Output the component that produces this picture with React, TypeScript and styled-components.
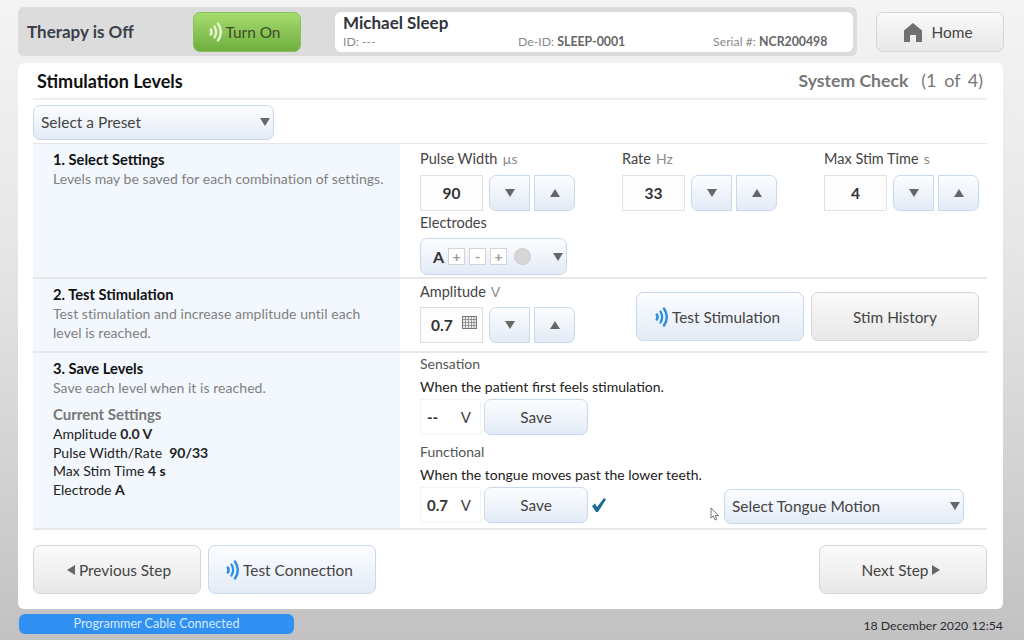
import React from 'react'
import styled, {createGlobalStyle, css} from 'styled-components'

const GlobalStyle = createGlobalStyle`
  html, body {
    margin: 0;
    padding: 0;
    font-family: "Lato", "Open Sans", sans-serif;
    color: #222;
  }
  * { box-sizing: border-box; }
`

const Page = styled.div`
  width: 1024px;
  height: 640px;
  overflow: hidden;
  padding: 7px 20px 0 18px;
  background: linear-gradient(#f4f4f4 0%, #e6e6e6 40%, #c2c2c2 100%);
`

const TopRow = styled.div`
  display: flex;
  align-items: flex-start;
  justify-content: space-between;
  height: 49px;
`

const StatusBar = styled.div`
  display: flex;
  align-items: center;
  width: 839px;
  height: 49px;
  padding: 0 4px 0 9px;
  background: #dcdcdc;
  border-radius: 6px;
`

const TherapyText = styled.div`
  width: 166px;
  font-size: 17px;
  font-weight: 700;
  color: #3a3f4a;
`

const buttonTone = {
  gray: css`
    background: linear-gradient(#fafafa, #e8e8e8);
    border: 1px solid #d6d6d6;
  `,
  blue: css`
    background: linear-gradient(#fcfdff, #e3ebf6);
    border: 1px solid #c9d9ec;
  `,
  green: css`
    background: linear-gradient(#a6dc6e, #6fae3f);
    border: 1px solid #86c058;
  `,
}

const Button = styled.div<{ $tone: keyof typeof buttonTone; $w: number; $h: number }>`
  display: flex;
  align-items: center;
  justify-content: center;
  gap: 4px;
  flex: none;
  width: ${p => p.$w}px;
  height: ${p => p.$h}px;
  border-radius: 7px;
  font-size: 15.4px;
  color: #444;
  ${p => buttonTone[p.$tone]}
`

const WaveButton = styled(Button)`
  gap: 3px;
  padding-right: 5px;
`

const TurnOn = styled(WaveButton)`
  color: #3d4a2c;
  margin-right: 34px;
`

const HomeButton = styled(Button)`
  margin-top: 5px;
  padding-right: 4px;
  gap: 8px;
`

const PatientCard = styled.div`
  flex: 1;
  height: 40px;
  padding: 1px 10px 0 8px;
  background: #fff;
  border-radius: 6px;
`

const PatientName = styled.div`
  font-size: 17px;
  font-weight: 700;
  line-height: 20px;
  color: #33333d;
`

const PatientMeta = styled.div`
  display: grid;
  grid-template-columns: 175px 195px 1fr;
  margin-top: 1px;
  font-size: 12.3px;
  line-height: 16px;
  color: #8a8a8a;

  b {
    color: #666;
  }
`

const Panel = styled.div`
  width: 985px;
  height: 546px;
  margin-top: 7px;
  padding: 0 16px 0 15px;
  background: #fff;
  border-radius: 6px;
`

const PanelHead = styled.div`
  display: flex;
  align-items: center;
  justify-content: space-between;
  height: 37px;
  padding: 0 4px;
  border-bottom: 2px solid #eee;
`

const PanelTitle = styled.div`
  font-size: 18px;
  font-weight: 700;
  color: #111;
`

const StepText = styled.div`
  margin-top: -2px;
  font-size: 18px;
  color: #777;
  word-spacing: 3px;

  b {
    margin-right: 13px;
    font-size: 17.6px;
    word-spacing: 0;
  }
`

const PresetRow = styled.div`
  height: 44px;
  padding-top: 5px;
  border-bottom: 1px solid #e6e6e6;
`

const Dropdown = styled.div<{ $w: number; $h: number }>`
  display: flex;
  align-items: center;
  justify-content: space-between;
  width: ${p => p.$w}px;
  height: ${p => p.$h}px;
  padding: 0 3px 1px 7px;
  border: 1px solid #c9d9ec;
  border-radius: 7px;
  background: linear-gradient(#fcfdff, #e3ebf6);
  font-size: 15.5px;
  color: #444;
`

const Section = styled.div<{ $h: number }>`
  display: grid;
  grid-template-columns: 367px 1fr;
  grid-template-rows: minmax(0, 1fr);
  height: ${p => p.$h}px;
  border-bottom: 2px solid #e8e8e8;
`

const SectionInfo = styled.div`
  padding: 6px 10px 0 20px;
  background: #f3f8fe;
`

const InfoTitle = styled.div`
  font-size: 14.7px;
  font-weight: 700;
  line-height: 18px;
  color: #111;
`

const InfoText = styled.div`
  margin-top: 1px;
  font-size: 14px;
  letter-spacing: 0.05px;
  line-height: 19px;
  color: #808080;
`

const SubTitle = styled.div`
  margin-top: 7px;
  font-size: 15px;
  font-weight: 700;
  line-height: 21px;
  color: #777;
`

const SettingLine = styled.div`
  font-size: 14px;
  line-height: 18.7px;
  color: #222;
`

const SectionBody = styled.div<{ $top: number }>`
  padding: ${p => p.$top}px 8px 0 20px;
`

const FieldRow = styled.div`
  display: grid;
  grid-template-columns: 202px 202px 1fr;
`

const FieldLabel = styled.div`
  height: 25px;
  font-size: 14.5px;
  line-height: 17px;
  color: #444;

  span {
    margin-left: 5px;
    font-size: 14px;
    color: #8c8c8c;
  }
`

const Stepper = styled.div`
  display: flex;
`

const ValueBox = styled.div`
  display: flex;
  align-items: center;
  justify-content: center;
  width: 63px;
  height: 36px;
  margin-right: 6px;
  border: 1px solid #e2e2e2;
  background: #fdfdfd;
  font-size: 15.5px;
  font-weight: 700;
  color: #333;
`

const AmpBox = styled(ValueBox)`
  justify-content: space-between;
  padding: 0 5px 0 10px;
  border-color: #dedede;

  svg {
    margin-top: -6px;
  }
`

const StepButton = styled.div`
  display: flex;
  align-items: center;
  justify-content: center;
  width: 41px;
  height: 36px;
  margin-right: 4px;
  border: 1px solid #c9d9ec;
  background: linear-gradient(#fcfdff, #e3ebf6);
  border-radius: 7px 0 0 7px;

  & + & {
    margin-right: 0;
    border-radius: 0 7px 7px 0;
  }
`

const Arrow = styled.i<{ $dir: 'up' | 'down' | 'left' | 'right'; $size?: number }>`
  display: block;
  flex: none;
  width: 0;
  height: 0;
  ${({$dir, $size = 5}) => {
    const side = `${$size}px solid transparent`
    const fill = `${Math.round($size * 1.5)}px solid #666`
    if ($dir === 'up') return css`border-left: ${side}; border-right: ${side}; border-bottom: ${fill};`
    if ($dir === 'down') return css`border-left: ${side}; border-right: ${side}; border-top: ${fill};`
    if ($dir === 'left') return css`border-top: ${side}; border-bottom: ${side}; border-right: ${fill};`
    return css`border-top: ${side}; border-bottom: ${side}; border-left: ${fill};`
  }}
`

const ElectrodeLabel = styled(FieldLabel)`
  margin-top: 3px;
  height: 24px;
`

const ElectrodeSelect = styled(Dropdown)`
  padding: 0 3px 0 12px;
`

const ElectrodeLeft = styled.div`
  display: flex;
  align-items: center;
  gap: 4px;
  font-size: 16px;
  font-weight: 700;
  color: #333;
`

const ElectrodeChip = styled.span`
  display: flex;
  align-items: center;
  justify-content: center;
  width: 17px;
  height: 17px;
  border: 1px solid #d4d4d4;
  background: #fff;
  font-size: 14px;
  font-weight: 700;
  color: #999;
`

const ElectrodeDot = styled.span`
  width: 17px;
  height: 17px;
  margin-left: 3px;
  border-radius: 50%;
  background: #d6d6d6;
  border: 1px solid #ccc;
`

const AmpRow = styled.div`
  display: flex;
  justify-content: space-between;
`

const AmpLabel = styled(FieldLabel)`
  height: 24px;
`

const ActionButtons = styled.div`
  display: flex;
  gap: 7px;
  margin-top: 9px;
`

const LevelLabel = styled.div`
  font-size: 14px;
  line-height: 18px;
  color: #555;
`

const LevelHint = styled.div`
  margin-top: 4px;
  font-size: 14px;
  line-height: 19px;
  color: #222;
`

const LevelRow = styled.div`
  display: flex;
  align-items: center;
  gap: 3px;
  height: 36px;
  margin: 3px 0 8px;
`

const LevelValue = styled.div`
  display: flex;
  align-items: center;
  justify-content: space-between;
  width: 61px;
  height: 36px;
  padding: 0 9px 0 6px;
  border: 1px solid #f4f4f4;
  font-size: 15px;
  font-weight: 700;
  color: #333;

  span {
    font-weight: 400;
    color: #444;
  }
`

const CursorMark = styled.svg`
  margin-left: 100px;
  margin-top: 18px;
`

const TongueSelect = styled(Dropdown)`
  margin-left: 1px;
  margin-top: 2px;
`

const BottomRow = styled.div`
  display: flex;
  gap: 7px;
  margin-top: 15px;
`

const PreviousButton = styled(Button)`
  padding-left: 4px;
`

const NextButton = styled(Button)`
  margin-left: auto;
  padding-right: 4px;
`

const Footer = styled.div`
  display: flex;
  align-items: center;
  justify-content: space-between;
  height: 20px;
  margin: 5px 1px 0 1px;
`

const CablePill = styled.div`
  width: 275px;
  height: 20px;
  border-radius: 6px;
  background: #3191f2;
  font-size: 12.6px;
  line-height: 20px;
  text-align: center;
  color: #d4e9ff;
`

const DateText = styled.div`
  margin-top: 2px;
  font-size: 12.3px;
  color: #2c2c34;
`

function WaveIcon(props: { color: string }) {
  return (
    <svg width="14" height="22" viewBox="0 0 14 22" fill="none" strokeLinecap="round">
      <path d="M1.8 8.5 Q3.4 11 1.8 13.5" stroke={props.color} strokeWidth="2.6"/>
      <path d="M5.5 5.5 Q8.8 11 5.5 16.5" stroke={props.color} strokeWidth="2.3"/>
      <path d="M9 2.5 Q14.6 11 9 19.5" stroke={props.color} strokeWidth="2.5"/>
    </svg>
  )
}

function HomeIcon() {
  return (
    <svg width="20" height="21" viewBox="0 0 20 21">
      <path d="M10 1 L19 8.5 V20 H13 V13 H7 V20 H1 V8.5 Z" fill="#707070"/>
    </svg>
  )
}

function KeypadIcon() {
  return (
    <svg width="15" height="13" viewBox="0 0 15 13" fill="none" stroke="#777" strokeWidth="1">
      <rect x="0.5" y="0.5" width="14" height="12" fill="#eee"/>
      <path d="M0.5 3.5H14.5M0.5 6.5H14.5M0.5 9.5H14.5M3.5 0.5V12.5M6.5 0.5V12.5M9.5 0.5V12.5M12 0.5V12.5" strokeWidth="0.7"/>
    </svg>
  )
}

function StepperButtons() {
  return (
    <>
      <StepButton><Arrow $dir="down"/></StepButton>
      <StepButton><Arrow $dir="up"/></StepButton>
    </>
  )
}

function Field(props: { label: string; unit: string; value: string }) {
  return (
    <div>
      <FieldLabel>{props.label}<span>{props.unit}</span></FieldLabel>
      <Stepper>
        <ValueBox>{props.value}</ValueBox>
        <StepperButtons/>
      </Stepper>
    </div>
  )
}

export default function App() {
  return (
    <Page>
      <GlobalStyle/>
      <TopRow>
        <StatusBar>
          <TherapyText>Therapy is Off</TherapyText>
          <TurnOn $tone="green" $w={108} $h={40}>
            <WaveIcon color="#e4f5d0"/>
            Turn On
          </TurnOn>
          <PatientCard>
            <PatientName>Michael Sleep</PatientName>
            <PatientMeta>
              <div>ID: ---</div>
              <div>De-ID: <b>SLEEP-0001</b></div>
              <div>Serial #: <b>NCR200498</b></div>
            </PatientMeta>
          </PatientCard>
        </StatusBar>
        <HomeButton $tone="gray" $w={128} $h={40}>
          <HomeIcon/>
          Home
        </HomeButton>
      </TopRow>

      <Panel>
        <PanelHead>
          <PanelTitle>Stimulation Levels</PanelTitle>
          <StepText><b>System Check</b>(1 of 4)</StepText>
        </PanelHead>
        <PresetRow>
          <Dropdown $w={241} $h={35}>
            Select a Preset
            <Arrow $dir="down" $size={5}/>
          </Dropdown>
        </PresetRow>

        <Section $h={135}>
          <SectionInfo>
            <InfoTitle>1. Select Settings</InfoTitle>
            <InfoText>Levels may be saved for each combination of settings.</InfoText>
          </SectionInfo>
          <SectionBody $top={6}>
            <FieldRow>
              <Field label="Pulse Width" unit="µs" value="90"/>
              <Field label="Rate" unit="Hz" value="33"/>
              <Field label="Max Stim Time" unit="s" value="4"/>
            </FieldRow>
            <ElectrodeLabel>Electrodes</ElectrodeLabel>
            <ElectrodeSelect $w={147} $h={37}>
              <ElectrodeLeft>
                A
                <ElectrodeChip>+</ElectrodeChip>
                <ElectrodeChip>-</ElectrodeChip>
                <ElectrodeChip>+</ElectrodeChip>
                <ElectrodeDot/>
              </ElectrodeLeft>
              <Arrow $dir="down"/>
            </ElectrodeSelect>
          </SectionBody>
        </Section>

        <Section $h={74}>
          <SectionInfo>
            <InfoTitle>2. Test Stimulation</InfoTitle>
            <InfoText>Test stimulation and increase amplitude until each<br/>level is reached.</InfoText>
          </SectionInfo>
          <SectionBody $top={4}>
            <AmpRow>
              <div>
                <AmpLabel>Amplitude<span>V</span></AmpLabel>
                <Stepper>
                  <AmpBox>0.7<KeypadIcon/></AmpBox>
                  <StepperButtons/>
                </Stepper>
              </div>
              <ActionButtons>
                <WaveButton $tone="blue" $w={168} $h={49}>
                  <WaveIcon color="#2f8fe6"/>
                  Test Stimulation
                </WaveButton>
                <Button $tone="gray" $w={168} $h={49}>Stim History</Button>
              </ActionButtons>
            </AmpRow>
          </SectionBody>
        </Section>

        <Section $h={177}>
          <SectionInfo>
            <InfoTitle>3. Save Levels</InfoTitle>
            <InfoText>Save each level when it is reached.</InfoText>
            <SubTitle>Current Settings</SubTitle>
            <SettingLine>Amplitude <b>0.0 V</b></SettingLine>
            <SettingLine>Pulse Width/Rate&nbsp; <b>90/33</b></SettingLine>
            <SettingLine>Max Stim Time <b>4 s</b></SettingLine>
            <SettingLine>Electrode <b>A</b></SettingLine>
          </SectionInfo>
          <SectionBody $top={2}>
            <LevelLabel>Sensation</LevelLabel>
            <LevelHint>When the patient first feels stimulation.</LevelHint>
            <LevelRow>
              <LevelValue>--<span>V</span></LevelValue>
              <Button $tone="blue" $w={104} $h={36}>Save</Button>
            </LevelRow>
            <LevelLabel>Functional</LevelLabel>
            <LevelHint>When the tongue moves past the lower teeth.</LevelHint>
            <LevelRow>
              <LevelValue>0.7<span>V</span></LevelValue>
              <Button $tone="blue" $w={104} $h={36}>Save</Button>
              <svg width="16" height="16" viewBox="0 0 16 16">
                <path d="M1 9 L4 6.5 L6 10 L13 1 L15 2.5 L7 15 L5 15 Z" fill="#1f6f93"/>
              </svg>
              <CursorMark width="10" height="14" viewBox="0 0 10 14">
                <path d="M1 1 V11 L3.4 9 L5 13 L6.8 12.2 L5.2 8.6 H8.5 Z" fill="#fff" stroke="#555" strokeWidth="0.8"/>
              </CursorMark>
              <TongueSelect $w={240} $h={35}>
                Select Tongue Motion
                <Arrow $dir="down"/>
              </TongueSelect>
            </LevelRow>
          </SectionBody>
        </Section>

        <BottomRow>
          <PreviousButton $tone="gray" $w={168} $h={49}>
            <Arrow $dir="left" $size={5}/>
            Previous Step
          </PreviousButton>
          <WaveButton $tone="blue" $w={168} $h={49}>
            <WaveIcon color="#2f8fe6"/>
            Test Connection
          </WaveButton>
          <NextButton $tone="gray" $w={168} $h={49}>
            Next Step
            <Arrow $dir="right" $size={5}/>
          </NextButton>
        </BottomRow>
      </Panel>

      <Footer>
        <CablePill>Programmer Cable Connected</CablePill>
        <DateText>18 December 2020 12:54</DateText>
      </Footer>
    </Page>
  )
}
